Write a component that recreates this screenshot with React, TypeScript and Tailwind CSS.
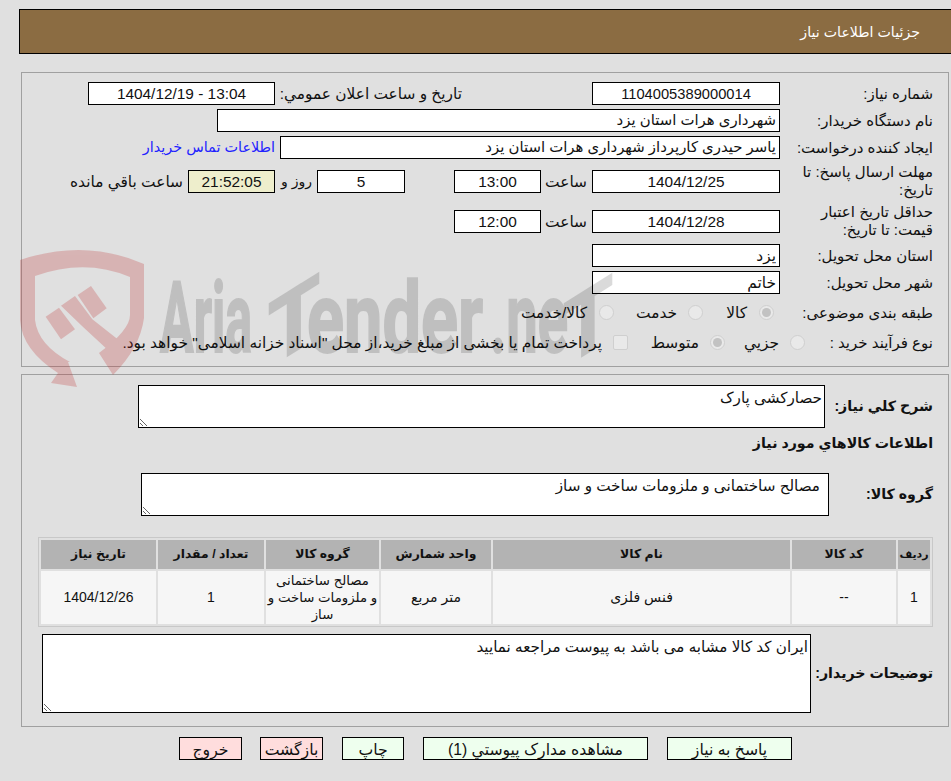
import React from "react";

const box = "h-[23px] border border-black flex items-center px-[3px] overflow-hidden whitespace-nowrap";

function Radio({ checked }: { checked?: boolean }) {
  return (
    <span className="w-[15px] h-[15px] rounded-full border border-[#cfcfcf] bg-[#e9e9e9] flex items-center justify-center shrink-0">
      {checked && <span className="w-[9px] h-[9px] rounded-full bg-[#c2c2c2]" />}
    </span>
  );
}

function Row({ label, children, className = "" }: { label: string; children?: React.ReactNode; className?: string }) {
  return (
    <div className={"flex items-center " + className}>
      <div className="w-[153px] shrink-0 pl-2 leading-[18px] text-[15px]">{label}</div>
      {children}
    </div>
  );
}

function Area({ value, className }: { value: string; className: string }) {
  return (
    <textarea
      readOnly
      dir="rtl"
      defaultValue={value}
      className={"block border border-black bg-white pl-[2px] pt-[3px] pb-0 leading-[18px] text-[15.2px] resize outline-none " + className}
    />
  );
}

function Btn({ label, pink, w }: { label: string; pink?: boolean; w: string }) {
  return (
    <button className={"h-[23px] border border-black text-[15.7px] " + w + " " + (pink ? "bg-[#ffdddd]" : "bg-[#eeffee]")}>
      {label}
    </button>
  );
}

const heads = ["رديف", "کد کالا", "نام کالا", "واحد شمارش", "گروه کالا", "تعداد / مقدار", "تاريخ نياز"];
const cols = ["w-[32px] text-[11px]", "w-[104px]", "w-[297px]", "w-[110px]", "w-[113px]", "w-[106px]", "w-[115px]"];

export default function App() {
  return (
    <div
      dir="rtl"
      className="relative h-[781px] overflow-hidden bg-[#e0e0e0] text-[15.4px] text-[#111] [font-family:'Liberation_Sans','DejaVu_Sans',sans-serif]"
    >
      <div className="pt-[9px] ml-[19px]">
        <div className="h-[45px] border border-black border-r-0 bg-[#8b6c42] text-white text-[14.2px] flex items-center pr-[31px] pt-[2px]">
          جزئيات اطلاعات نياز
        </div>
      </div>

      {/* main info */}
      <section className="mt-[18px] ml-[21px] mr-[2px] h-[295px] border border-[#a0a0a0] pr-[15px] pt-[9px]">
        <Row label="شماره نياز:">
          <div className={box + " w-[188px] justify-center bg-white text-[14.7px]"}>1104005389000014</div>
          <div className="w-[130px] shrink-0" />
          <div className="w-[182px] shrink-0 whitespace-nowrap">تاريخ و ساعت اعلان عمومي:</div>
          <div dir="ltr" className={box + " w-[187px] justify-center bg-white mr-[5px]"}>1404/12/19 - 13:04</div>
        </Row>
        <Row label="نام دستگاه خريدار:" className="mt-[4px]">
          <div className={box + " w-[563px] bg-white text-[14.9px]"}>شهرداری هرات استان يزد</div>
        </Row>
        <Row label="ايجاد کننده درخواست:" className="mt-[4px]">
          <div className={box + " w-[500px] bg-white text-[14.9px]"}>ياسر حيدری کارپرداز شهرداری هرات استان يزد</div>
          <a className="mr-[5px] text-[#2222ff] text-[14.4px] whitespace-nowrap">اطلاعات تماس خريدار</a>
        </Row>
        <Row label="مهلت ارسال پاسخ: تا تاريخ:" className="mt-[4px] h-[36px]">
          <div className={box + " w-[188px] h-[22px] justify-center bg-white"}>1404/12/25</div>
          <div className="w-[51px] pr-[5px]">ساعت</div>
          <div className={box + " w-[87px] h-[22px] justify-center bg-white"}>13:00</div>
          <div className={box + " w-[88px] h-[22px] justify-center bg-white mr-[49px]"}>5</div>
          <div className="w-[42px] pr-[5px] text-[14px] whitespace-nowrap">روز و</div>
          <div className={box + " w-[87px] h-[22px] justify-center bg-[#eeeecc]"}>21:52:05</div>
          <div className="pr-[5px] whitespace-nowrap">ساعت باقي مانده</div>
        </Row>
        <Row label="حداقل تاريخ اعتبار قيمت: تا تاريخ:" className="mt-[4px] h-[36px]">
          <div className={box + " w-[188px] justify-center bg-white"}>1404/12/28</div>
          <div className="w-[51px] pr-[5px]">ساعت</div>
          <div className={box + " w-[87px] justify-center bg-white"}>12:00</div>
        </Row>
        <Row label="استان محل تحويل:" className="mt-[5px]">
          <div className={box + " w-[188px] bg-white"}>يزد</div>
        </Row>
        <Row label="شهر محل تحويل:" className="mt-[4px]">
          <div className={box + " w-[188px] bg-white"}>خاتم</div>
        </Row>
        <Row label="طبقه بندی موضوعی:" className="mt-[7px]">
          <div className="flex items-center pr-[6px]">
            <Radio checked />
            <span className="mr-[12px] w-[44px]">کالا</span>
            <Radio />
            <span className="mr-[11px] w-[63px]">خدمت</span>
            <Radio />
            <span className="mr-[12px]">کالا/خدمت</span>
          </div>
        </Row>
        <Row label="نوع فرآيند خريد :" className="mt-[7px]">
          <div className="flex items-center -mr-[25px]">
            <Radio />
            <span className="mr-[11px] w-[54px]">جزيي</span>
            <Radio checked />
            <span className="mr-[11px] w-[71px]">متوسط</span>
            <span className="w-[15px] h-[15px] rounded-[2px] border border-[#cfcfcf] bg-[#e9e9e9] shrink-0" />
            <span className="mr-[11px] whitespace-nowrap">پرداخت تمام يا بخشی از مبلغ خريد،از محل "اسناد خزانه اسلامی" خواهد بود.</span>
          </div>
        </Row>
      </section>

      {/* goods */}
      <section className="mt-[7px] ml-[21px] mr-[2px] h-[353px] border border-[#a0a0a0] pr-[15px] pt-[10px] font-bold">
        <div className="flex items-center">
          <div className="w-[108px] shrink-0 text-[14.2px] whitespace-nowrap">شرح کلي نياز:</div>
          <Area value="حصارکشی پارک" className="w-[687px] h-[43px] font-normal pr-[2px]" />
        </div>
        <div className="mt-[5px] h-[20px] text-[14.2px] leading-[20px]">اطلاعات کالاهاي مورد نياز</div>
        <div className="flex items-center mt-[20px]">
          <div className="w-[104px] shrink-0 text-[14.2px] whitespace-nowrap">گروه کالا:</div>
          <Area value="مصالح ساختمانی و ملزومات ساخت و ساز" className="w-[688px] h-[43px] font-normal pr-[8px]" />
        </div>
        <table className="mt-[21px] w-[895px] table-fixed border-separate border-spacing-[2px] border border-[#c8c8c8] text-[12.4px] text-center">
          <thead>
            <tr className="h-[29px] bg-[#b3b3b3]">
              {heads.map((h, i) => (
                <th key={h} className={cols[i] + " p-0 font-bold whitespace-nowrap"}>
                  {h}
                </th>
              ))}
            </tr>
          </thead>
          <tbody className="font-normal text-[14px] leading-[17px]">
            <tr className="h-[53px] bg-[#f6f6f6]">
              <td className="p-0">1</td>
              <td className="p-0">--</td>
              <td className="p-0">فنس فلزی</td>
              <td className="p-0">متر مربع</td>
              <td className="p-0 whitespace-nowrap text-[13.3px]">
                مصالح ساختمانی
                <br />
                و ملزومات ساخت و
                <br />
                ساز
              </td>
              <td className="p-0">1</td>
              <td className="p-0">1404/12/26</td>
            </tr>
          </tbody>
        </table>
        <div className="flex items-center mt-[7px]">
          <div className="w-[122px] shrink-0 text-[14.2px] whitespace-nowrap">توضيحات خريدار:</div>
          <Area value="ايران کد کالا مشابه می باشد به پيوست مراجعه نماييد" className="w-[769px] h-[79px] font-normal pr-[2px]" />
        </div>
      </section>

      <div className="mt-[10px] flex gap-[19px] pr-[159px]">
        <Btn label="پاسخ به نياز" w="w-[125px]" />
        <Btn label="مشاهده مدارک پيوستي (1)" w="w-[225px]" />
        <Btn label="چاپ" w="w-[62px]" />
        <Btn label="بازگشت" pink w="w-[63px]" />
        <Btn label="خروج" pink w="w-[63px] -mr-[1px]" />
      </div>

      {/* watermark logo */}
      <svg
        viewBox="0 0 951 781"
        className="absolute inset-0 w-[951px] h-[781px] pointer-events-none [direction:ltr]"
      >
        <g fill="#be2828" opacity="0.24">
          <path d="M20 260 Q85 238 144 264 L144 318 Q140 348 113 375 L99 353 Q130 330 130 315 L130 277 Q85 258 35 276 L35 320 Q38 345 70 362 L68 362 L77 387 L51 383 L58 373 Q22 350 20 320 Z" />
          <g transform="translate(15 240) scale(0.3333)">
            <polygon points="92,230 132,203 180,268 138,298" />
            <polygon points="138,197 180,168 232,238 330,315 295,345 205,262" />
            <polygon points="188,165 228,138 275,205 235,235" />
          </g>
        </g>
        <g fill="#000" stroke="#000" strokeWidth="2" opacity="0.14" fontFamily="Roboto, sans-serif" fontWeight="700">
          <text x="160" y="352" fontSize="98" textLength="92" lengthAdjust="spacingAndGlyphs">Aria</text>
          <text transform="translate(268 368) skewY(-32)" fontSize="89" textLength="52" lengthAdjust="spacingAndGlyphs">T</text>
          <text x="307" y="352" fontSize="98" textLength="176" lengthAdjust="spacingAndGlyphs">ender</text>
          <text x="490" y="352" fontSize="98" textLength="78" lengthAdjust="spacingAndGlyphs">.ne</text>
          <text transform="translate(563 368) skewY(-32)" fontSize="89" textLength="50" lengthAdjust="spacingAndGlyphs">T</text>
        </g>
      </svg>
    </div>
  );
}
